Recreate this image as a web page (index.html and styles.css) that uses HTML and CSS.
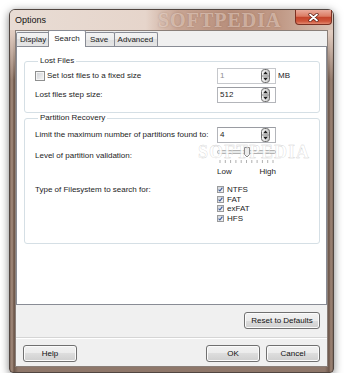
FILE: index.html
```html
<!DOCTYPE html>
<html lang="en">
<head>
  <meta charset="UTF-8" />
  <title>Options</title>
  <link rel="stylesheet" href="styles.css">
</head>
<body>
  <div class="window">
    <div class="titlebar">
      <span class="title">Options</span>
      <span class="brand">SOFTPEDIA</span>
      <button class="close">
        <svg width="11" height="9" viewBox="0 0 11 9"><path d="M2 1.5 L9 7.5 M9 1.5 L2 7.5" stroke="#5a1d12" stroke-width="3.2" stroke-linecap="round"/><path d="M2 1.5 L9 7.5 M9 1.5 L2 7.5" stroke="#fff" stroke-width="1.8" stroke-linecap="round"/></svg>
      </button>
    </div>

    <div class="client">
      <div class="tabs">
        <div class="tab">Display</div>
        <div class="tab active">Search</div>
        <div class="tab">Save</div>
        <div class="tab">Advanced</div>
      </div>

      <div class="panel">
        <fieldset class="group lost">
          <legend>Lost Files</legend>
          <div class="row first">
            <label class="check"><span class="box"></span>Set lost files to a fixed size</label>
            <div class="spin disabled"><span>1</span>
              <svg width="9" height="14" viewBox="0 0 9 14"><defs><linearGradient id="sg1" x1="0" x2="1"><stop offset="0" stop-color="#fafafa"/><stop offset="1" stop-color="#c4c4c4"/></linearGradient></defs><rect x="0.5" y="0.5" width="8" height="13" rx="3" fill="url(#sg1)" stroke="#6e6e6e"/><path d="M1 7 H8" stroke="#8a8a8a"/><path d="M2.2 5.3 L4.5 2.5 L6.8 5.3 Z M2.2 8.7 L4.5 11.5 L6.8 8.7 Z" fill="#1d1d1d"/></svg>
            </div>
            <span class="unit">MB</span>
          </div>
          <div class="row">
            <span>Lost files step size:</span>
            <div class="spin"><span>512</span>
              <svg width="9" height="14" viewBox="0 0 9 14"><rect x="0.5" y="0.5" width="8" height="13" rx="3" fill="url(#sg1)" stroke="#6e6e6e"/><path d="M1 7 H8" stroke="#8a8a8a"/><path d="M2.2 5.3 L4.5 2.5 L6.8 5.3 Z M2.2 8.7 L4.5 11.5 L6.8 8.7 Z" fill="#1d1d1d"/></svg>
            </div>
          </div>
        </fieldset>

        <fieldset class="group parts">
          <legend>Partition Recovery</legend>
          <div class="row first">
            <span>Limit the maximum number of partitions found to:</span>
            <div class="spin"><span>4</span>
              <svg width="9" height="14" viewBox="0 0 9 14"><rect x="0.5" y="0.5" width="8" height="13" rx="3" fill="url(#sg1)" stroke="#6e6e6e"/><path d="M1 7 H8" stroke="#8a8a8a"/><path d="M2.2 5.3 L4.5 2.5 L6.8 5.3 Z M2.2 8.7 L4.5 11.5 L6.8 8.7 Z" fill="#1d1d1d"/></svg>
            </div>
          </div>
          <div class="row level">
            <span>Level of partition validation:</span>
            <svg class="slider" width="59" height="20" viewBox="0 0 59 20">
              <rect x="0.5" y="4.5" width="58" height="3" rx="1" fill="#e8ebeb" stroke="#b3b3b3"/>
              <path d="M3 14v3M8.3 14v3M13.6 14v3M18.9 14v3M24.2 14v3M29.5 14v3M34.8 14v3M40.1 14v3M45.4 14v3M50.7 14v3M56 14v3" stroke="#b0b0b0"/>
              <path d="M27.5 1.5 H32.5 V8.5 L30 11 L27.5 8.5 Z" fill="#ececec" stroke="#8c8c8c"/>
            </svg>
          </div>
          <div class="row scale">
            <span></span>
            <div class="ends"><span>Low</span><span>High</span></div>
          </div>
          <div class="row types">
            <span>Type of Filesystem to search for:</span>
            <div class="fslist">
              <div class="fs"><span class="mini"></span>NTFS</div>
              <div class="fs"><span class="mini"></span>FAT</div>
              <div class="fs"><span class="mini"></span>exFAT</div>
              <div class="fs"><span class="mini"></span>HFS</div>
            </div>
          </div>
        </fieldset>

        <div class="watermark">SOFTPEDIA</div>
      </div>

      <div class="reset-row">
        <button class="btn wide">Reset to Defaults</button>
      </div>
      <div class="separator"></div>
      <div class="footer">
        <button class="btn help">Help</button>
        <button class="btn">OK</button>
        <button class="btn">Cancel</button>
      </div>
    </div>
  </div>
</body>
</html>
```

FILE: styles.css
```css
body {
  margin: 0;
  background: #fff;
  font: 8px/10px "Liberation Sans", Arial, sans-serif;
  color: #1c1c1c;
}
.window {
  margin: 9px 0 0 9px;
  width: 325px;
  height: 364px;
  box-sizing: border-box;
  padding: 0 5px 5px;
  border: 1px solid #514641;
  border-radius: 6px 6px 4px 4px;
  background:
    linear-gradient(to bottom, #e7dbd3 0, #dfcabe 24px, rgba(0,0,0,0) 70px),
    linear-gradient(to right, #7d6659 0, #a58c7d 2px, #6c5649 4px, #8e776a 8px, #8e776a calc(100% - 8px), #6e584c calc(100% - 4px), #9e8576 calc(100% - 2px), #7c675b 100%);
  box-shadow: 0 2px 9px rgba(0,0,0,.5);
  display: flex;
  flex-direction: column;
}
.titlebar {
  position: relative;
  height: 20px;
  margin: 0 -5px;
  padding-left: 5px;
  display: flex;
  align-items: center;
  background: linear-gradient(90deg, #e8dcd4 0, #e6d5cb 42%, #c8a594 52%, #b88f7c 68%, #c19a87 84%, #d9c2b5 100%);
  border-radius: 5px 5px 0 0;
}
.title {
  font-size: 9px;
  color: #111;
}
.brand {
  position: absolute;
  left: 148px;
  top: 1px;
  font: bold 20px/18px "Liberation Serif", serif;
  letter-spacing: 1px;
  color: rgba(255, 238, 228, .45);
  text-shadow: 0 0 2px rgba(110, 70, 50, .35);
}
.close {
  margin-left: auto;
  margin-right: 1px;
  align-self: flex-start;
  width: 37px;
  height: 15px;
  padding: 0;
  border: 1px solid #7b3022;
  border-top: none;
  border-radius: 0 0 4px 4px;
  background: linear-gradient(#eaaa9b 0, #db7b63 45%, #c4452c 52%, #cf553a 80%, #e38a70 100%);
  display: flex;
  align-items: center;
  justify-content: center;
  position: relative;
}
.client {
  flex: 1;
  border: 1px solid #8a7f79;
  background: #f0f0f0;
  display: flex;
  flex-direction: column;
}
.tabs {
  height: 15px;
  display: flex;
  align-items: flex-end;
  position: relative;
  z-index: 1;
}
.tab {
  height: 14px;
  min-width: 30px;
  box-sizing: border-box;
  padding: 0 4px 0 3px;
  margin-right: -1px;
  border: 1px solid #898c95;
  border-bottom: none;
  border-radius: 2px 2px 0 0;
  background: linear-gradient(#f3f3f3 0, #ececec 50%, #dfdfdf 50%, #e6e6e6 100%);
  line-height: 13px;
  text-align: center;
}
.tab.active {
  height: 17px;
  margin: 0 -1px -1px -2px;
  padding: 0 5px;
  background: #fff;
  line-height: 15px;
  position: relative;
  z-index: 2;
}
.panel {
  position: relative;
  height: 259px;
  box-sizing: border-box;
  border: 1px solid #898c95;
  background: #fff;
  padding: 9px 6px 0 7px;
}
.group {
  margin: 0;
  min-width: 0;
  border: 1px solid #d5dfe5;
  border-radius: 3px;
  padding: 0 0 9px 10px;
}
.group legend {
  padding: 0 2px;
  margin-left: 3px;
  line-height: 10px;
}
.group.parts {
  padding-bottom: 20px;
}
.row {
  display: grid;
  grid-template-columns: 182px 59px auto;
  align-items: center;
  margin-top: 3px;
}
.row.first {
  margin-top: 2px;
}
.parts .row.first {
  margin-top: 4px;
}
.row.level {
  height: 20px;
}
.row.scale {
  margin-top: 1px;
  height: 10px;
}
.row.types {
  margin-top: 8px;
  align-items: start;
  line-height: 9.5px;
}
.check {
  display: flex;
  align-items: center;
  gap: 2px;
}
.box {
  width: 10px;
  height: 10px;
  box-sizing: border-box;
  border: 1px solid #8e8f8f;
  box-shadow: inset 0 0 0 1px #f4f4f4;
  background: linear-gradient(135deg, #cdd0d4, #f6f6f6);
}
.spin {
  height: 16px;
  box-sizing: border-box;
  border: 1px solid #b3b5ba;
  border-top-color: #9a9ca2;
  display: flex;
  align-items: center;
  justify-content: space-between;
  padding: 0 5px 0 2px;
  background: #fff;
}
.spin.disabled span {
  color: #8f8f8f;
}
.spin.disabled {
  border-color: #c6c8cc;
}
.unit {
  padding-left: 2px;
}
.slider {
  display: block;
}
.ends {
  display: flex;
  justify-content: space-between;
}
.fs {
  height: 9.5px;
  display: flex;
  align-items: center;
  gap: 3px;
}
.mini {
  width: 7px;
  height: 7px;
  box-sizing: border-box;
  border: 1px solid #9a9b9c;
  background:
    url("data:image/svg+xml,%3Csvg xmlns='http://www.w3.org/2000/svg' width='5' height='5' viewBox='0 0 5 5'%3E%3Cpath d='M0.6 2.6 L1.9 4 L4.4 0.6' fill='none' stroke='%233b5a9c' stroke-width='1.1'/%3E%3C/svg%3E") center / 5px 5px no-repeat,
    linear-gradient(135deg, #d3d6da, #f4f4f4);
}
.watermark {
  position: absolute;
  left: 181px;
  top: 98px;
  font: bold 18px/14px "Liberation Serif", serif;
  letter-spacing: 1px;
  color: rgba(255, 255, 255, .85);
  -webkit-text-stroke: 0.4px rgba(150, 150, 150, .45);
  pointer-events: none;
}
.reset-row {
  display: flex;
  justify-content: flex-end;
  padding: 7px 7px 8px;
}
.separator {
  border-top: 1px solid #d5d5d5;
  border-bottom: 1px solid #fff;
}
.footer {
  display: flex;
  gap: 6px;
  padding: 6px 7px 4px;
}
.btn {
  width: 54px;
  height: 17px;
  padding: 0;
  border: 1px solid #707070;
  border-radius: 3px;
  background: linear-gradient(#f2f2f2 0, #ebebeb 50%, #dddddd 50%, #cfcfcf 100%);
  box-shadow: inset 0 0 0 1px #fbfbfb;
  font: inherit;
  color: #111;
}
.btn.wide {
  width: 76px;
}
.btn.help {
  margin-right: auto;
}
```
